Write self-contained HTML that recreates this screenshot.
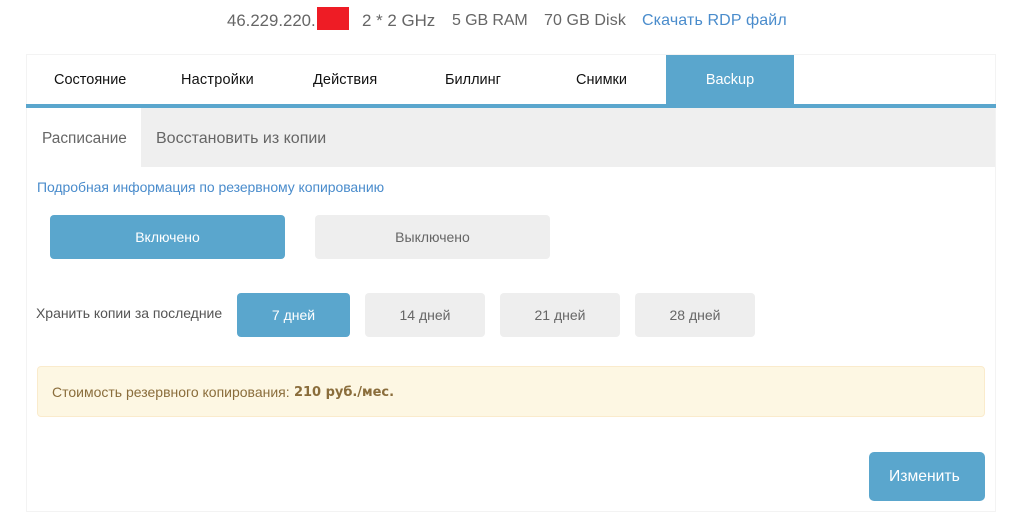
<!DOCTYPE html>
<html><head><meta charset="utf-8">
<style>
html,body{margin:0;padding:0;background:#fff;width:1018px;height:527px;overflow:hidden;font-family:"Liberation Sans",sans-serif;}
.a{position:absolute;white-space:nowrap;}
.c{position:absolute;display:flex;align-items:center;justify-content:center;white-space:nowrap;border-radius:4px;}
.on{background:#5aa6cd;color:#fff;}
.off{background:#eee;color:#666;}
</style></head><body>
<div class="a" style="left:26px;top:54px;width:968px;height:456px;border:1px solid #f3f3f3;"></div>
<div class="a" style="left:227px;top:10px;font-size:16.8px;line-height:21px;color:#666;">46.229.220.</div>
<div class="a" style="left:317px;top:7px;width:32px;height:23px;background:#ee1c25;"></div>
<div class="a" style="left:362px;top:10px;font-size:16.9px;line-height:21px;color:#666;">2 * 2 GHz</div>
<div class="a" style="left:452px;top:10px;font-size:16px;line-height:21px;color:#666;letter-spacing:-.1px;">5 GB RAM</div>
<div class="a" style="left:544px;top:10px;font-size:16px;line-height:21px;color:#666;letter-spacing:.1px;">70 GB Disk</div>
<div class="a" style="left:642px;top:10px;font-size:16px;line-height:21px;color:#4a8ccc;letter-spacing:.13px;">Скачать RDP файл</div>

<div class="a" style="left:54px;top:71px;font-size:14.5px;line-height:18px;color:#111;">Состояние</div>
<div class="a" style="left:181px;top:71px;font-size:14.5px;line-height:18px;color:#111;letter-spacing:.2px;">Настройки</div>
<div class="a" style="left:313px;top:71px;font-size:14.5px;line-height:18px;color:#111;letter-spacing:.1px;">Действия</div>
<div class="a" style="left:445px;top:71px;font-size:14.5px;line-height:18px;color:#111;">Биллинг</div>
<div class="a" style="left:576px;top:71px;font-size:14.5px;line-height:18px;color:#111;">Снимки</div>
<div class="c" style="left:666px;top:55px;width:128px;height:49px;background:#5aa6cd;color:#fff;font-size:14.5px;border-radius:0;">Backup</div>
<div class="a" style="left:26px;top:104px;width:970px;height:4px;background:#5aa6cd;"></div>

<div class="a" style="left:141px;top:108px;width:854px;height:59px;background:#efefef;"></div>
<div class="a" style="left:42px;top:129px;font-size:15.4px;line-height:20px;color:#666;">Расписание</div>
<div class="a" style="left:156px;top:129px;font-size:16px;line-height:20px;color:#666;">Восстановить из копии</div>

<div class="a" style="left:37px;top:179px;font-size:14px;line-height:17px;color:#4a8ccc;letter-spacing:-.06px;">Подробная информация по резервному копированию</div>

<div class="c on" style="left:50px;top:215px;width:235px;height:44px;font-size:14px;">Включено</div>
<div class="c off" style="left:315px;top:215px;width:235px;height:44px;font-size:14px;">Выключено</div>

<div class="a" style="left:36px;top:305px;font-size:14px;line-height:17px;color:#555;letter-spacing:-.03px;">Хранить копии за последние</div>
<div class="c on" style="left:237px;top:293px;width:113px;height:44px;font-size:14px;">7 дней</div>
<div class="c off" style="left:365px;top:293px;width:120px;height:44px;font-size:14px;">14 дней</div>
<div class="c off" style="left:500px;top:293px;width:120px;height:44px;font-size:14px;">21 дней</div>
<div class="c off" style="left:635px;top:293px;width:120px;height:44px;font-size:14px;">28 дней</div>

<div class="a" style="left:37px;top:366px;width:946px;height:49px;background:#fdf7e3;border:1px solid #faebcc;border-radius:4px;"></div>
<div class="a" style="left:52px;top:384px;font-size:14px;line-height:17px;color:#8a6d3b;">Стоимость резервного копирования:<b style="position:absolute;left:242px;top:0;font-family:'DejaVu Sans',sans-serif;font-size:13px;line-height:18px;letter-spacing:-.02px;">210 руб./мес.</b></div>

<div class="a" style="left:889px;top:467px;font-size:15.7px;line-height:20px;color:#fff;z-index:1;">Изменить</div>
<div class="c on" style="left:869px;top:452px;width:116px;height:49px;border-radius:5px;"></div>
</body></html>
